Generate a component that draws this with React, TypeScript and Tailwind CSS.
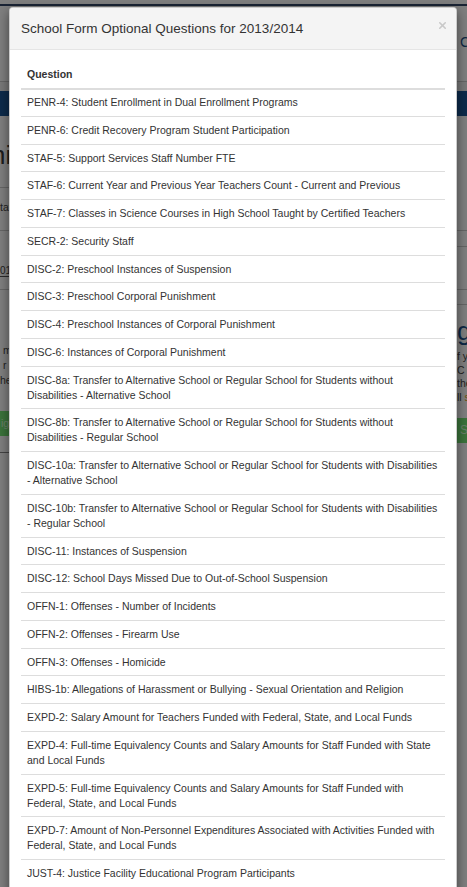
import { X } from "lucide-react";

const questions = [
  "PENR-4: Student Enrollment in Dual Enrollment Programs",
  "PENR-6: Credit Recovery Program Student Participation",
  "STAF-5: Support Services Staff Number FTE",
  "STAF-6: Current Year and Previous Year Teachers Count - Current and Previous",
  "STAF-7: Classes in Science Courses in High School Taught by Certified Teachers",
  "SECR-2: Security Staff",
  "DISC-2: Preschool Instances of Suspension",
  "DISC-3: Preschool Corporal Punishment",
  "DISC-4: Preschool Instances of Corporal Punishment",
  "DISC-6: Instances of Corporal Punishment",
  "DISC-8a: Transfer to Alternative School or Regular School for Students without Disabilities - Alternative School",
  "DISC-8b: Transfer to Alternative School or Regular School for Students without Disabilities - Regular School",
  "DISC-10a: Transfer to Alternative School or Regular School for Students with Disabilities - Alternative School",
  "DISC-10b: Transfer to Alternative School or Regular School for Students with Disabilities - Regular School",
  "DISC-11: Instances of Suspension",
  "DISC-12: School Days Missed Due to Out-of-School Suspension",
  "OFFN-1: Offenses - Number of Incidents",
  "OFFN-2: Offenses - Firearm Use",
  "OFFN-3: Offenses - Homicide",
  "HIBS-1b: Allegations of Harassment or Bullying - Sexual Orientation and Religion",
  "EXPD-2: Salary Amount for Teachers Funded with Federal, State, and Local Funds",
  "EXPD-4: Full-time Equivalency Counts and Salary Amounts for Staff Funded with State and Local Funds",
  "EXPD-5: Full-time Equivalency Counts and Salary Amounts for Staff Funded with Federal, State, and Local Funds",
  "EXPD-7: Amount of Non-Personnel Expenditures Associated with Activities Funded with Federal, State, and Local Funds",
  "JUST-4: Justice Facility Educational Program Participants",
];

// The page that sits behind the modal (only its edges show)
function BackgroundPage() {
  return (
    <div className="absolute inset-0 bg-white text-[#444]">
      <div className="h-[4px]" />
      <div className="h-[2px] bg-[#34486a]" />
      <div className="h-[76px] border-b border-[#ccc] pl-[460px] pt-[28px] whitespace-nowrap text-[14px] leading-[16px] text-[#1d4f86]">
        Contact Us
      </div>
      <div className="h-[9px] bg-[#f2f2f2]" />
      <div className="h-[25px] bg-[#1b5796]" />

      <div className="flex">
        {/* left column */}
        <div className="w-[233px] overflow-hidden whitespace-nowrap">
          <div className="-ml-[9px] h-[71px] pt-[26px] text-[26px] leading-none text-[#3a3a3a]">hiring</div>
          <div className="h-[43px] border-t border-[#ccc] pt-[12px] text-[10.5px] leading-[15px]">
            tatus
          </div>
          <div className="h-[59px] border-t border-[#ccc] pt-[26px]">
            <span className="border-b border-[#555] text-[10px] leading-[12px]">01</span>
          </div>
          <div className="h-[122px] border-t border-[#ccc] pt-[53px] pl-[3px] text-[10.5px] leading-[15px]">
            <div>m</div>
            <div>r c</div>
            <div className="-ml-[3px]">he</div>
          </div>
          <div className="h-[25px] bg-[#76e676] pl-[1px] text-[10.5px] leading-[25px] text-[#d4ffd4]">igate</div>
          <div className="mt-[16px] border-t border-[#888]" />
        </div>

        {/* right column */}
        <div className="w-[234px] overflow-hidden whitespace-nowrap pl-[224px]">
          <div className="h-[114px]" />
          <div className="h-[16px] border-t border-[#ccc]" />
          <div className="h-[43px] border-t border-[#ccc]" />
          <div className="h-[15px] border-t border-[#ccc]" />
          <div className="border-t border-[#ccc] pt-[13px] text-[26px] leading-[26px] text-[#1b4f8a]">g Data</div>
          <div className="pt-[6px] text-[10.5px] leading-[13.5px]">
            <div>f you</div>
            <div>
              C <span className="text-[#e0a020]">e</span>
            </div>
            <div>the</div>
            <div>
              ll <span className="text-[#e0a020]">s</span>
            </div>
          </div>
          <div className="mt-[14px] h-[25px] bg-[#76e676] pl-[3px] text-[12px] leading-[25px] text-[#d4ffd4]">Save</div>
        </div>
      </div>
    </div>
  );
}

export default function App() {
  return (
    <div className="relative h-[887px] w-[467px] overflow-hidden font-['Liberation_Sans',Arial,sans-serif]">
      <BackgroundPage />

      {/* Modal backdrop */}
      <div className="absolute inset-0 bg-black/50" />

      {/* Modal */}
      <div className="absolute left-[9px] top-[7px] w-[448px] rounded-[4px] border border-black/20 bg-white shadow-[0_4px_12px_rgba(0,0,0,0.5)]">
        <div className="relative rounded-t-[4px] border-b border-[#e5e5e5] bg-[#f4f4f4] px-[11px] py-[12px]">
          <h4 className="text-[13.5px] leading-[17px] text-[#333]">School Form Optional Questions for 2013/2014</h4>
          <button className="absolute right-[8px] top-[12px] text-[#c9c9c9]">
            <X size={11} strokeWidth={3.5} />
          </button>
        </div>

        <div className="p-[11px]">
          <table className="w-full border-collapse text-[10.5px] leading-[15px] text-[#333]">
            <thead>
              <tr>
                <th className="border-b-2 border-[#ddd] px-[6px] py-[6px] text-left font-bold">Question</th>
              </tr>
            </thead>
            <tbody>
              {questions.map((q, i) => (
                <tr key={q}>
                  <td
                    className={
                      i === 0
                        ? "px-[6px] pt-[5px] pb-[5.75px]"
                        : "border-t border-[#ddd] px-[6px] pt-[6px] pb-[5.75px]"
                    }
                  >
                    {q}
                  </td>
                </tr>
              ))}
            </tbody>
          </table>
        </div>
      </div>
    </div>
  );
}
